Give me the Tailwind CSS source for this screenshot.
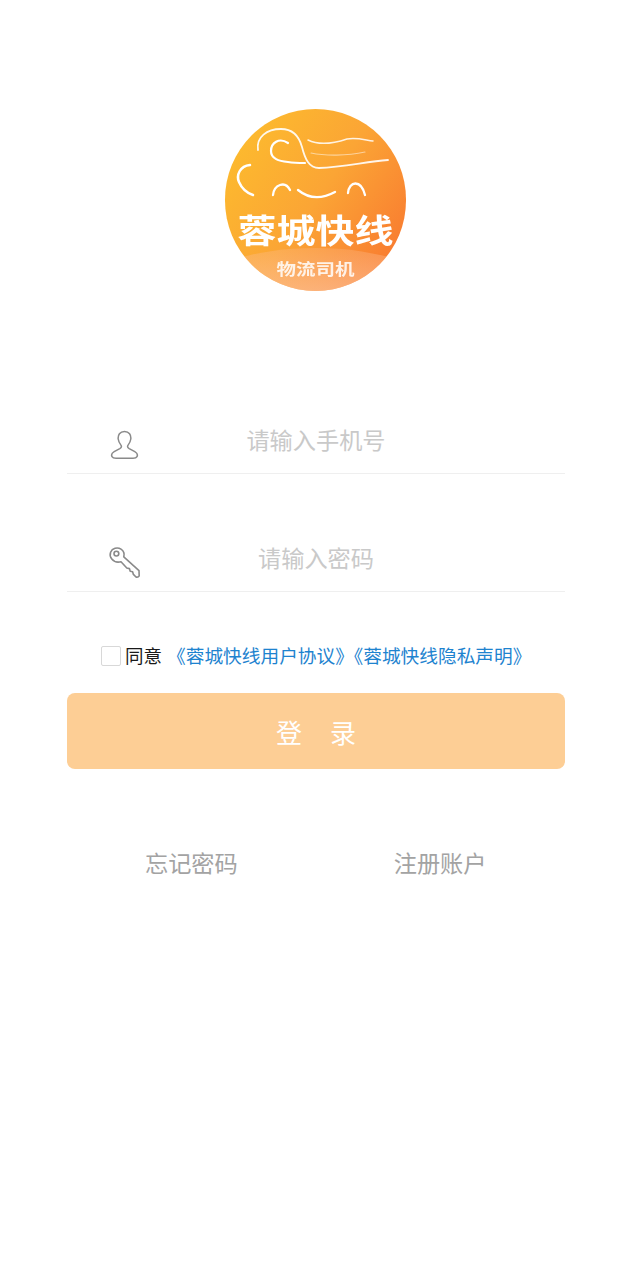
<!DOCTYPE html>
<html lang="zh-CN">
<head>
    <meta charset="UTF-8">
    <meta name="viewport" content="width=device-width, initial-scale=1.0">
    <title>蓉城快线</title>
    <script src="https://cdn.jsdelivr.net/npm/@tailwindcss/browser@4"></script>
</head>
<body class="bg-white font-['Noto_Sans_CJK_SC','Noto_Sans',sans-serif]">
    <div class="w-[630px] h-[1280px] overflow-hidden pl-[67px] pr-[65px] pt-[109px]">
        <!-- logo -->
        <div class="relative w-[181px] h-[182px] ml-[158px] rounded-full overflow-hidden bg-linear-[125deg] from-[#fdc02c] via-[#fba535] to-[#f8702f]">
            <div class="absolute -left-[30px] -right-[30px] top-[139px] h-[90px] rounded-[50%] bg-linear-to-b from-[#fdbb8c]/30 to-[#fdc9a8]"></div>
            <svg class="absolute inset-0 blur-[0.4px]" width="181" height="182" viewBox="0 0 181 182" fill="none" stroke="#fff" stroke-linecap="round">
                <path d="M33 41C31 28 42 20 56 20C68 20 74 27 77 38C80 50 84 59 94 59C118 58 140 53 163 51" stroke-width="1.8" opacity=".9"/>
                <path d="M63 34C54 28 46 34 46 42C46 50 54 52 63 53C69 54 75 54 80 54" stroke-width="2.2"/>
                <path d="M83 31C95 37 110 34 122 30C131 28 140 31 148 32" stroke-width="1.5" opacity=".85"/>
                <path d="M86 44C100 47 122 47 140 43" stroke-width="1.1" opacity=".5"/>
                <path d="M25 56C15 57 11 66 14 73C17 80 22 84 28 86" stroke-width="2.5"/>
                <path d="M48 86C49 76 60 71 65 81" stroke-width="2.3"/>
                <path d="M123 84C124 72 136 70 140 86" stroke-width="2.3"/>
                <path d="M73 81C84 90 97 90 110 83" stroke-width="2.3"/>
            </svg>
            <div class="absolute left-0 right-0 top-[100px] text-center text-[39px] leading-[40px] font-bold text-white scale-y-[.84] whitespace-nowrap">蓉城快线</div>
            <div class="absolute left-0 right-0 top-[148px] text-center text-[19.5px] leading-[22px] font-bold text-white/85 scale-y-[.82]">物流司机</div>
        </div>

        <!-- phone -->
        <div class="relative mt-[125px] h-[58px] border-b border-[#efefef] flex items-center justify-center">
            <svg class="absolute left-[43px] top-[14px]" width="29" height="30" viewBox="0 0 29 30" fill="none" stroke="#8a8a8a" stroke-width="1.5">
                <path d="M14.5 1.5C9.8 1.5 7.8 5 8.2 9C8.5 12 10 14 11.2 15.6C11.8 16.8 11.2 17.8 9.8 18.6L4.2 21.6C1.8 23 1.2 25 2 26.6C2.6 27.8 4 28.3 6 28.3H23C25 28.3 26.4 27.8 27 26.6C27.8 25 27.2 23 24.8 21.6L19.2 18.6C17.8 17.8 17.2 16.8 17.8 15.6C19 14 20.5 12 20.8 9C21.2 5 19.2 1.5 14.5 1.5Z"/>
            </svg>
            <span class="text-[23.2px] leading-[30px] text-[#c9c9c9] -mt-[12px]">请输入手机号</span>
        </div>

        <!-- password -->
        <div class="relative mt-[60px] h-[58px] border-b border-[#efefef] flex items-center justify-center">
            <svg class="absolute left-[41px] top-[12px]" width="33" height="33" viewBox="0 0 33 33" fill="none" stroke="#8a8a8a" stroke-width="1.6" stroke-linejoin="round">
                <path d="M2.6 6.2C4.2 2.2 9.5 0.8 13 3.2C15.6 5 16.6 8 15.8 10.8L31 24.6L31.2 29.8C30.6 30.9 29.4 31.4 28 31L25.4 28.4L24.6 25.8L22.2 25.2L21.4 22.6L18.8 22L13 15.8C9.8 16.6 6 15.8 3.8 13C2.2 11 1.8 8.4 2.6 6.2Z"/>
                <circle cx="8.4" cy="7.6" r="2.4"/>
            </svg>
            <span class="text-[23.2px] leading-[30px] text-[#c9c9c9] -mt-[12px]">请输入密码</span>
        </div>

        <!-- agreement -->
        <div class="mt-[54px] h-[20px] flex items-center ml-[34px] whitespace-nowrap">
            <span class="w-[20px] h-[20px] border border-[#d8d8d8] rounded-[2px] bg-white"></span>
            <span class="ml-[4px] -mt-[2px] text-[18.5px] leading-[20px] text-[#1a1a1a]">同意</span>
            <span class="ml-[5px] -mt-[2px] text-[18.7px] leading-[20px] text-[#1e83cf]">《蓉城快线用户协议》《蓉城快线隐私声明》</span>
        </div>

        <!-- login -->
        <button class="mt-[27px] w-[498px] h-[76px] rounded-[8px] bg-[#fdce95] flex items-center justify-center gap-[28px] text-[26px] text-white">
            <span>登</span><span>录</span>
        </button>

        <!-- links -->
        <div class="mt-[76px] flex text-[23.2px] leading-[34px] text-[#a3a3a3]">
            <a class="ml-[78px]">忘记密码</a>
            <a class="ml-[156px]">注册账户</a>
        </div>
    </div>
</body>
</html>
